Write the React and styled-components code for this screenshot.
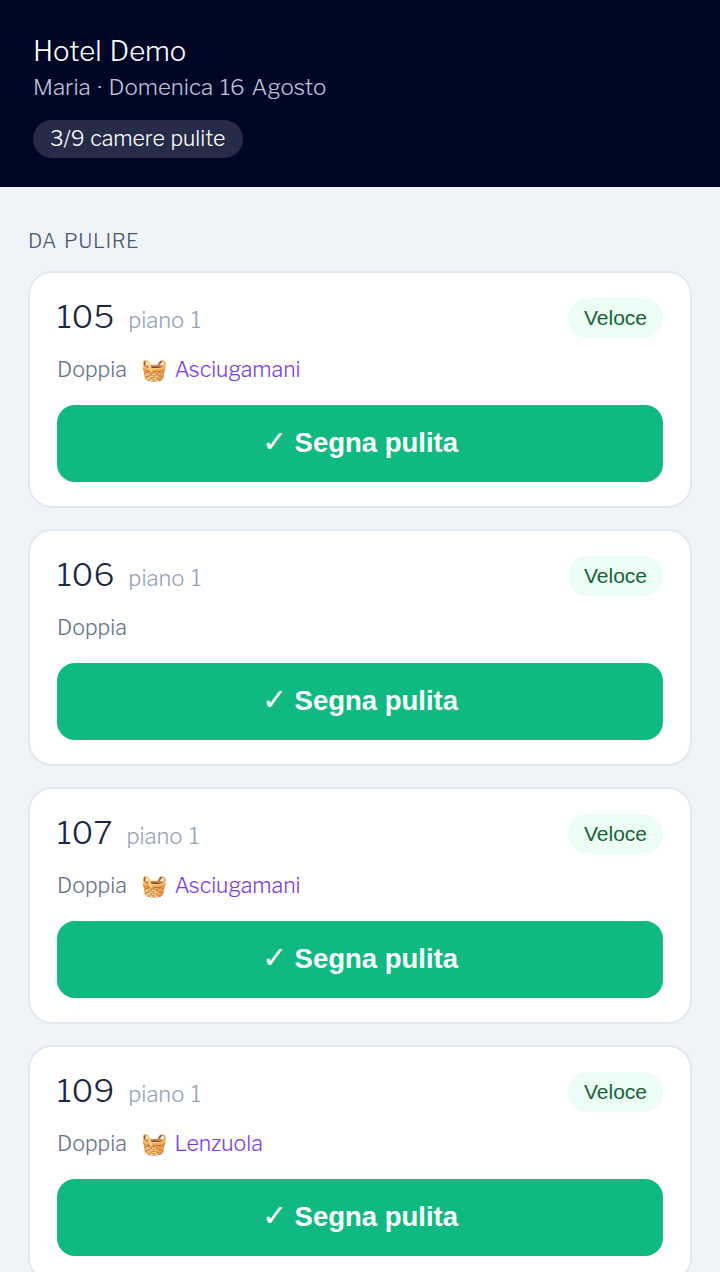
import React from "react";
import styled, { createGlobalStyle } from "styled-components";

const Global = createGlobalStyle`
  html, body {
    margin: 0;
    padding: 0;
    background: #f0f4f8;
    font-family: "Libre Franklin", "Public Sans", "Liberation Sans", sans-serif;
    font-weight: 300;
    word-spacing: 2px;
  }
`;

const Page = styled.div`
  height: 1272px;
  overflow: hidden;
`;

const Header = styled.header`
  height: 187px;
  box-sizing: border-box;
  padding: 33px 33px 0;
  background: #000626;
  display: flex;
  flex-direction: column;
  align-items: flex-start;
`;

const Title = styled.div`
  font-size: 27.5px;
  line-height: 36px;
  color: #fff;
`;

const Sub = styled.div`
  font-size: 22.3px;
  line-height: 30px;
  margin-top: 3px;
  color: #b8c4dc;
`;

const Chip = styled.div`
  margin-top: 18px;
  width: 210px;
  height: 38px;
  box-sizing: border-box;
  line-height: 36px;
  padding-left: 17px;
  border-radius: 19px;
  background: #262c48;
  color: #fff;
  font-size: 21.3px;
  word-spacing: 1px;
`;

const Main = styled.main`
  padding: 40px 28px 0;
`;

const SectionLabel = styled.div`
  font-size: 20px;
  line-height: 28px;
  letter-spacing: 0.6px;
  color: #4a5874;
  margin-bottom: 16px;
`;

const List = styled.div`
  display: flex;
  flex-direction: column;
  gap: 21px;
`;

const Card = styled.div`
  box-sizing: border-box;
  height: 237px;
  padding: 25px 27px 0;
  background: #fff;
  border: 2px solid #e2e8f0;
  border-radius: 24px;
`;

const Top = styled.div`
  display: flex;
  align-items: center;
  justify-content: space-between;
  height: 40px;
`;

const RoomInfo = styled.div`
  display: flex;
  align-items: baseline;
  gap: 14px;
  margin-top: -3px;
`;

const RoomNumber = styled.span`
  font-size: 32px;
  color: #1a2744;
`;

const Floor = styled.span`
  font-size: 22px;
  color: #94a3b8;
`;

const Badge = styled.span`
  height: 40px;
  line-height: 39px;
  padding: 0 16px;
  border-radius: 20px;
  background: #ecfdf5;
  color: #166534;
  font-family: "Liberation Sans", sans-serif;
  font-weight: 400;
  font-size: 21px;
`;

const Details = styled.div`
  display: flex;
  align-items: center;
  height: 30px;
  margin-top: 16px;
  font-size: 21.3px;
  color: #64748b;
`;

const Extra = styled.span`
  margin-left: 14px;
  color: #7c3aed;
`;

const MarkButton = styled.button`
  display: block;
  width: 100%;
  height: 77px;
  margin-top: 21px;
  padding: 0 0 5px;
  border: none;
  border-radius: 18px;
  background: #10b981;
  color: #fff;
  font-family: "Liberation Sans", sans-serif;
  font-size: 27.5px;
  font-weight: 700;
  word-spacing: 0;
`;

const Check = styled.span`
  font-size: 30px;
  font-weight: 400;
`;

const rooms = [
  { number: 105, extra: "Asciugamani" },
  { number: 106 },
  { number: 107, extra: "Asciugamani" },
  { number: 109, extra: "Lenzuola" },
];

export default function App() {
  return (
    <Page>
      <Global />
      <Header>
        <Title>Hotel Demo</Title>
        <Sub>Maria · Domenica 16 Agosto</Sub>
        <Chip>3/9 camere pulite</Chip>
      </Header>
      <Main>
        <SectionLabel>DA PULIRE</SectionLabel>
        <List>
          {rooms.map((room) => (
            <Card key={room.number}>
              <Top>
                <RoomInfo>
                  <RoomNumber>{room.number}</RoomNumber>
                  <Floor>piano 1</Floor>
                </RoomInfo>
                <Badge>Veloce</Badge>
              </Top>
              <Details>
                Doppia
                {room.extra && <Extra>🧺 {room.extra}</Extra>}
              </Details>
              <MarkButton><Check>✓</Check> Segna pulita</MarkButton>
            </Card>
          ))}
        </List>
      </Main>
    </Page>
  );
}
